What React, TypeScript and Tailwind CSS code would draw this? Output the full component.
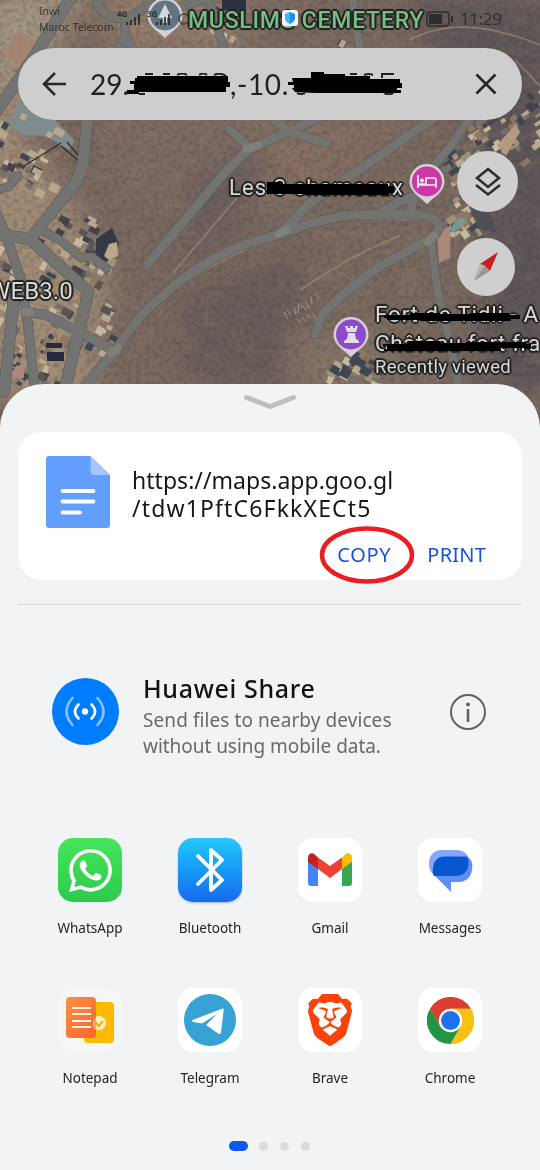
import React from "react";
import { SiBrave, SiWhatsapp } from "react-icons/si";

const ROADS: { d: string; w: number }[] = [
  { d: "M73 -6 L34 57 L-4 112", w: 11 },
  { d: "M88 112 L83 165 L76 182 L60 202 L30 239 L16 237 L-6 234", w: 11 },
  { d: "M30 239 L60 266 L88 291 L86 302 L64 392", w: 11 },
  { d: "M-6 208 L6 235 L20 277 L28 325 L35 392", w: 9 },
  { d: "M14 296 L10 335 L4 392", w: 11 },
  { d: "M28 312 L46 315 L80 332 L116 352", w: 9 },
  { d: "M43 231 L58 239 L82 258 L92 257 L106 268", w: 8 },
  {
    d: "M80 392 L116 350 Q138 315 160 298 Q195 265 240 246 L283 233 Q320 219 350 215 L405 214 Q432 214 439 224 Q440 233 428 240 L382 265 Q340 294 322 315 L315 334",
    w: 9,
  },
  { d: "M147 265 L205 196 Q230 165 250 149 L290 131 L330 112", w: 9 },
  { d: "M229 129 L250 148", w: 9 },
  { d: "M274 120 L289 132 L327 143", w: 9 },
  { d: "M281 233 L310 203 L350 176 L440 114", w: 9 },
  { d: "M468 120 L450 147 L432 168", w: 8 },
  { d: "M431 240 L437 288 L447 330 L460 392", w: 8 },
  { d: "M95 -5 Q99 15 116 18 L126 18 Q143 14 152 -4", w: 9 },
  { d: "M125 18 L125 36 L136 54 M125 36 L117 52", w: 9 },
  { d: "M165 12 L208 -2 Q217 22 224 52", w: 8 },
  { d: "M353 -3 L354 20 L361 52", w: 8 },
  { d: "M379 214 L400 201 L414 197 L410 213", w: 9 },
  { d: "M-3 190 L8 187 L18 176", w: 8 },
];

const CLUSTERS: [number, number, number, number, number][] = [
  [0, 112, 58, 70, 26],
  [0, 160, 40, 40, 14],
  [54, 212, 38, 26, 18],
  [38, 236, 62, 46, 34],
  [88, 234, 26, 34, 16],
  [40, 302, 74, 50, 52],
  [38, 346, 30, 40, 14],
  [8, 335, 20, 48, 16],
  [462, 115, 60, 55, 50],
  [440, 150, 30, 35, 18],
  [440, 195, 36, 45, 24],
  [518, 90, 20, 60, 14],
  [322, 350, 56, 30, 34],
  [0, 245, 16, 80, 20],
  [205, 3, 36, 34, 12],
  [340, 38, 15, 12, 5],
];

const TONES = ["#b7a88d", "#44424a", "#9f9077", "#c5b9a1", "#5a5455", "#776f69", "#3d4654", "#8f7862"];

function buildings() {
  let seed = 17;
  const next = () => {
    seed = (seed * 16807) % 2147483647;
    return seed / 2147483647;
  };
  return CLUSTERS.flatMap(([x, y, w, h, n], c) =>
    Array.from({ length: n }, (_, i) => {
      const px = x + next() * w;
      const py = y + next() * h;
      return (
        <rect
          key={`${c}-${i}`}
          x={px}
          y={py}
          width={4 + next() * 7}
          height={3 + next() * 6}
          fill={TONES[Math.floor(next() * TONES.length)]}
          transform={`rotate(${x > 400 ? -35 : 28} ${px} ${py})`}
        />
      );
    })
  );
}

function SatelliteMap() {
  return (
    <svg className="absolute left-0 top-0" width="540" height="450" viewBox="0 0 540 450">
      <defs>
        <filter id="soft" x="-30%" y="-30%" width="160%" height="160%" colorInterpolationFilters="sRGB">
          <feGaussianBlur stdDeviation="14" />
        </filter>
        <filter id="edge" colorInterpolationFilters="sRGB">
          <feGaussianBlur stdDeviation="0.7" />
        </filter>
        <filter id="grain" x="0" y="0" width="100%" height="100%" colorInterpolationFilters="sRGB">
          <feTurbulence type="fractalNoise" baseFrequency="0.22" numOctaves="3" seed="5" />
          <feColorMatrix values="0 0 0 0 0.22  0 0 0 0 0.2  0 0 0 0 0.23  1.8 0 0 0 -0.74" />
        </filter>
        <filter id="light" x="0" y="0" width="100%" height="100%" colorInterpolationFilters="sRGB">
          <feTurbulence type="fractalNoise" baseFrequency="0.04 0.07" numOctaves="4" seed="9" />
          <feColorMatrix values="0 0 0 0 0.65  0 0 0 0 0.55  0 0 0 0 0.47  0 1.6 0 0 -0.68" />
        </filter>
      </defs>
      <rect width="540" height="450" fill="#79695f" />
      <g filter="url(#soft)">
        <path d="M-20 -20H95L20 130L70 200L110 280L90 400H-20Z" fill="#a18c76" />
        <path d="M0 0L60 0L0 90Z" fill="#a09a87" />
        <path d="M100 40H210L270 140L190 220L100 190Z" fill="#7d6b61" />
        <path d="M100 -10H250V50H110Z" fill="#947d6b" />
        <path d="M250 110L420 120L270 220Z" fill="#866f61" />
        <path d="M180 300L300 250L310 380L190 390Z" fill="#685d5a" />
        <path d="M400 0H560V150H480L430 50Z" fill="#5f5657" />
        <path d="M490 120H560V390H480Z" fill="#5d5657" />
        <path d="M290 330H390V390H290Z" fill="#857366" />
        <path d="M200 165L270 150L240 230L170 270Z" fill="#6b5f5d" />
      </g>
      <rect width="540" height="450" filter="url(#light)" opacity="0.25" />
      <rect width="540" height="450" filter="url(#grain)" opacity="0.36" />
      <g fill="none" stroke="#ad9074" strokeWidth="1.6" opacity="0.6">
        <path d="M0 36L24 19L46 0M173 273L237 198M75 382L142 316Q185 273 270 239" />
        <path d="M410 40Q460 12 540 45M515 60L540 86" />
        <path d="M300 290Q360 250 400 236M350 219L430 219" />
      </g>
      <path d="M18 31L39 42L22 67L2 54Z" fill="#a8806d" opacity="0.75" />
      <path d="M20 101L55 120L75 141L69 150L46 136L22 135L8 123Z" fill="#7e8c8c" />
      <g filter="url(#edge)">
        {buildings()}
        <path d="M96 239L112 228L119 244L107 262L96 257Z" fill="#353845" />
        <path d="M109 244L117 242L118 256L109 260L104 256Z" fill="#b9a989" />
        <path d="M61 146L79 161M67 142L78 155M24 166L61 143" stroke="#302c2a" strokeWidth="1.3" fill="none" />
        <path d="M437 233L451 225L450 258L439 263Z" fill="#a7887a" />
        <path d="M449 229L461 216L467 222L453 233Z" fill="#779890" />
        <path d="M461 188L486 204L497 232L478 229Z" fill="#444953" opacity="0.7" />
        <path d="M497 145L516 124L520 132L506 156Z" fill="#b59a82" />
        <path d="M222 0H246V12L222 10Z" fill="#2d3242" />
        <path d="M46 343H62V348H46ZM47 352H64V361H47Z" fill="#252a3c" />
        <path d="M12 370L24 367V378H12Z" fill="#ae8580" />
      </g>
      <g fill="none" strokeLinejoin="round" strokeLinecap="round">
        {ROADS.map((r) => (
          <path key={r.d} d={r.d} stroke="#585857" strokeWidth={r.w + 1} />
        ))}
        {ROADS.map((r) => (
          <path key={r.d} d={r.d} stroke="#737371" strokeWidth={r.w} />
        ))}
        <path d="M111 353L118 348M428 242L434 236M279 234L286 230M246 149L258 145M25 312L30 312" stroke="#858581" strokeWidth="8" opacity="0.7" />
      </g>
      <g stroke="#b8aca0" strokeWidth="1" fill="none" opacity="0.7">
        <path d="M284 312l4 7m-1-9l4 6m3-9l2 8m3-12l-1 10m3-8l5 5m-1-10l4 8m2-12l1 8m3-10l4 5M297 319l3 4m2-6l3 4m2-6l4 3m2-5l3 6" />
      </g>
    </svg>
  );
}

function Scribble({ variant }: { variant: "a" | "b" }) {
  return variant === "a" ? (
    <svg width="106" height="22" viewBox="0 0 106 22" className="absolute left-[127px] top-[73px]">
      <path d="M10 3H101V9H103V14H99V19H12V21H0V17H7V11H3V8H8V5H10Z" fill="#000" />
      <path d="M18 1H26M36 1H43M50 2Q55 -1 60 2M72 2Q77 -1 80 2M87 2Q93 -1 99 3M12 21H18" stroke="#222" strokeWidth="2" fill="none" />
    </svg>
  ) : (
    <svg width="116" height="24" viewBox="0 0 116 24" className="absolute left-[287px] top-[71px]">
      <path d="M5 7H24V1H37V3H58V5H83V8H113V12H115V17H110V19H114V22H28L8 21L5 17H7V14H1V11H6Z" fill="#000" />
      <path d="M63 3H70M77 4Q82 2 86 4M95 7V3H107M10 22Q14 24 18 22M97 22Q104 25 107 21" stroke="#222" strokeWidth="2" fill="none" />
    </svg>
  );
}

function Pin({ color, children, className }: { color: string; children?: React.ReactNode; className: string }) {
  return (
    <svg className={className} width="38" height="42" viewBox="0 0 38 42">
      <path d="M19 1A17.5 17.5 0 0 1 36.5 18.5C36.500 29 27 33 19 41C11 33 1.500 29 1.500 18.500A17.500 17.500 0 0 1 19 1Z" fill="#d5d0d8" />
      <circle cx="19" cy="18.500" r="15" fill={color} />
      {children}
    </svg>
  );
}

const HALO =
  "[text-shadow:-1px_-1px_1px_#222,1px_-1px_1px_#222,-1px_1px_1px_#222,1px_1px_1px_#222,0_2px_1px_#222,2px_0_1px_#222,-2px_0_1px_#222,0_-2px_1px_#222]";

function MapLabels() {
  return (
    <div className={`font-[Roboto,sans-serif] whitespace-nowrap text-[#d8d8d8] ${HALO}`}>
      <div className="absolute left-[188px] top-[8px] text-[23px] font-medium leading-[26px] tracking-[0.75px] text-[#76bd82]">MUSLIMS CEMETERY</div>
      <div className="absolute left-[229px] top-[175px] text-[22px] leading-[25px] tracking-[1.1px]">Les 3 chameaux</div>
      <div className="absolute left-[-11px] top-[277px] text-[24px] leading-[28px] tracking-[0.1px]">WEB3.0</div>
      <div className="absolute left-[375px] top-[301px] text-[22.500px] leading-[26px] tracking-[0.8px]">Fort de Tidli - A</div>
      <div className="absolute left-[375px] top-[330px] text-[22.500px] leading-[26px] tracking-[0.5px]">Château fort fra</div>
      <div className="absolute left-[375px] top-[357px] text-[18.500px] leading-[21px] tracking-[0.25px]">Recently viewed</div>
    </div>
  );
}

function Redactions() {
  return (
    <svg className="absolute left-0 top-0" width="540" height="384" viewBox="0 0 540 384">
      <path d="M267 182H283V184H388V186H394V193H389V195H303V194H267Z" fill="#000" />
      <path d="M384 315H410V313H440V314H470V313H509V315H520V319H511V321H420V320H387V318H384Z" fill="#000" />
      <path d="M383 344H408V341H440V343H466V342H526V344H531V349H525V348H501V351H384V349H387V346H383Z" fill="#000" />
    </svg>
  );
}

function StatusBar() {
  return (
    <div className="relative flex h-12 items-start text-[#262626]">
      <div className="ml-[39px] mt-[3px] w-[76px] whitespace-nowrap text-[10.500px] leading-[16px] opacity-80">
        <div>Inwi</div>
        <div>Maroc Telecom</div>
      </div>
      <svg width="76" height="30" viewBox="0 0 76 30" className="mt-[3px] shrink-0 opacity-80">
        <text x="2" y="14" fontSize="8" fontWeight="700" fill="#222">4G</text>
        <text x="32" y="14" fontSize="8" fontWeight="700" fill="#222">3G</text>
        <path d="M12 22V19M16 22V17M20 22V14M24 22V11" stroke="#222" strokeWidth="2" />
        <path d="M42 22V19M46 22V17M50 22V14M54 22V11" stroke="#222" strokeWidth="2" />
        <circle cx="69" cy="16" r="5" fill="none" stroke="#333" strokeWidth="1.600" />
      </svg>
      <svg width="16" height="16" viewBox="0 0 16 16" className="ml-[91px] mt-[10px] shrink-0">
        <rect width="16" height="16" rx="3" fill="#f5f7f8" />
        <path d="M8 2L13 4V8C13 11 10 13 8 14C6 13 3 11 3 8V4Z" fill="#1c91f4" />
        <path d="M8 2V14C6 13 3 11 3 8V4Z" fill="#45b5ff" />
      </svg>
      <svg width="28" height="16" viewBox="0 0 28 16" className="ml-[128px] mt-[11px] shrink-0 opacity-80">
        <rect x="1" y="1" width="22" height="14" rx="3" fill="none" stroke="#222" strokeWidth="1.400" />
        <rect x="3" y="3" width="13" height="10" rx="1" fill="#222" />
        <path d="M26 5V11" stroke="#222" strokeWidth="2" />
      </svg>
      <span className="ml-[6px] mt-[9px] text-[17px] leading-[20px] tracking-[-0.4px] opacity-80">11:29</span>
    </div>
  );
}

function SearchBar() {
  return (
    <div className="relative mx-[18px] flex h-[72px] items-center rounded-full bg-[#cecece] text-[#202124]">
      <svg width="26" height="26" viewBox="0 0 26 26" className="ml-6" fill="none" stroke="#252629" strokeWidth="2.500">
        <path d="M24 13H2M13 2L2 13L13 24" />
      </svg>
      <div className="ml-[22px] flex grow items-center font-[Lato,sans-serif] text-[28px] leading-9">
        <span className="w-[140px]">29.</span>
        <span className="tracking-[0.6px]">,-10.</span>
      </div>
      <svg width="22" height="22" viewBox="0 0 22 22" className="mr-[25px]" fill="none" stroke="#252629" strokeWidth="2.500">
        <path d="M1.500 1.500L20.500 20.500M20.500 1.500L1.500 20.500" />
      </svg>
    </div>
  );
}

const tile = "flex size-16 shrink-0 items-center justify-center rounded-[15px]";

const APPS: { name: string; icon: React.ReactNode }[] = [
  {
    name: "WhatsApp",
    icon: (
      <div className={`${tile} bg-linear-to-b from-[#45e65c] to-[#2cca4b]`}>
        <SiWhatsapp size={43} color="#fff" />
      </div>
    ),
  },
  {
    name: "Bluetooth",
    icon: (
      <div className={`${tile} bg-linear-to-b from-[#27c8fc] to-[#1c68ed] shadow-[0_1px_2px_#9bbce8]`}>
        <svg width="64" height="64" viewBox="0 0 64 64" fill="none" stroke="#fff" strokeWidth="3.800" strokeLinecap="round" strokeLinejoin="round">
          <path d="M20 18L44 42L33 52V12L44 22L20 46" />
        </svg>
      </div>
    ),
  },
  {
    name: "Gmail",
    icon: (
      <div className={`${tile} bg-white`}>
        <svg width="44" height="34" viewBox="0 0 44 34">
          <path d="M0 8L10 14V33H3Q0 33 0 30Z" fill="#4285f4" />
          <path d="M34 14L44 8V30Q44 33 41 33H34Z" fill="#34a853" />
          <path d="M34 4.500L36.500 2.300C40 -1.500 44 .8 44 5V9L34 16Z" fill="#fbbc04" />
          <path d="M10 4.500L22 13L34 4.500V16L22 25L10 16Z" fill="#ea4335" />
          <path d="M10 4.500L7.500 2.300C4 -1.500 0 .8 0 5V9L10 16Z" fill="#c5221f" />
        </svg>
      </div>
    ),
  },
  {
    name: "Messages",
    icon: (
      <div className={`${tile} bg-white`}>
        <svg width="64" height="64" viewBox="0 0 64 64">
          <path d="M23 12H39C44 12 49 15 50 19L46 38H17C12 34 11 30 11 25C11 17 17 12 23 12Z" fill="#87a8fa" />
          <path d="M15 33L50 19C54 22 55 27 54 32C53 40 47 44 41 44H33V54L17 38Z" fill="#628cf5" />
          <path d="M26 18.500H49Q51 22 50.500 27C49 34 45 38 38 38H16Q14 35 15 30C15.500 23 20 18.500 26 18.500Z" fill="#0755cf" />
        </svg>
      </div>
    ),
  },
  {
    name: "Notepad",
    icon: (
      <div className={`${tile} bg-[#f6f6f6]`}>
        <svg width="64" height="64" viewBox="0 0 64 64">
          <defs>
            <linearGradient id="note" x2="1" y2="1">
              <stop stopColor="#ff9142" />
              <stop offset="1" stopColor="#fb632e" />
            </linearGradient>
          </defs>
          <rect x="26" y="14" width="30" height="41" rx="4" fill="#ffb900" />
          <circle cx="41" cy="35" r="7" fill="#fff0c5" />
          <rect x="8" y="9" width="30" height="41" rx="4" fill="url(#note)" />
          <path d="M34.500 36Q34.500 32 38 29V42Q34.500 40 34.500 36Z" fill="#ffa477" />
          <path d="M37.500 34.500L41 38L45 33" fill="none" stroke="#f8ac00" strokeWidth="2" />
          <path d="M14 20H33M14 26H33M14 33H33M14 39H33" stroke="#fff3e9" strokeWidth="2" />
        </svg>
      </div>
    ),
  },
  {
    name: "Telegram",
    icon: (
      <div className={`${tile} bg-white`}>
        <svg width="52" height="52" viewBox="0 0 52 52">
          <circle cx="26" cy="26" r="26" fill="#36a2d5" />
          <path d="M8.500 26L38 14.700Q40 14 39.700 16L37 38.500Q36.500 41 34.500 39.700L22 31L33 20L18 29.500L9 28Q7.500 27 8.500 26Z" fill="#fff" />
        </svg>
      </div>
    ),
  },
  {
    name: "Brave",
    icon: (
      <div className={`${tile} bg-white`}>
        <SiBrave size={52} color="#fb4208" />
      </div>
    ),
  },
  {
    name: "Chrome",
    icon: (
      <div className={`${tile} bg-white`}>
        <svg width="47" height="47" viewBox="0 0 48 48">
          <circle cx="24" cy="24" r="24" fill="#f8c012" />
          <path d="M3.200 12A24 24 0 0 1 44.800 12H24L13.600 30Z" fill="#db3c33" />
          <path d="M3.200 12A24 24 0 0 0 24 48L34.400 30L24 36L13.600 30Z" fill="#219545" />
          <path d="M24 12H44.800A24 24 0 0 1 24 48L34.400 30Z" fill="#f8c012" />
          <circle cx="24" cy="24" r="12" fill="#fff" />
          <circle cx="24" cy="24" r="9.600" fill="#1b73e8" />
        </svg>
      </div>
    ),
  },
];

function LinkCard() {
  return (
    <div className="relative mx-[18px] mt-[20px] h-[148px] shrink-0 rounded-[24px] bg-white">
      <div className="flex pl-[28px] pt-[24px]">
        <svg width="64" height="72" viewBox="0 0 64 72">
          <path d="M3 0H44.500L64 19V69Q64 72 61 72H3Q0 72 0 69V3Q0 0 3 0Z" fill="#629ffd" />
          <path d="M44.500 0L64 19H48Q44.500 19 44.500 15Z" fill="#a4c6fb" />
          <path d="M16.500 35H47.500M16.500 45.500H47.500M16.500 56.500H34" stroke="#fff" strokeWidth="3.800" strokeLinecap="round" />
        </svg>
        <div className="ml-[22px] mt-[10px] whitespace-nowrap text-[23px] leading-[28px] text-[#161719]">
          <div className="tracking-[0.03px]">https://maps.app.goo.gl</div>
          <div className="tracking-[1.15px]">/tdw1PftC6FkkXECt5</div>
        </div>
      </div>
      <div className="mt-[13px] flex justify-end gap-[36px] pr-[36px] text-[20px] leading-[27px] text-[#1554d4]">
        <button className="relative tracking-[0.7px]">
          COPY
          <svg className="absolute left-[-18px] top-[-15px] max-w-none" width="96" height="58" viewBox="0 0 96 58">
            <ellipse cx="48" cy="29" rx="45" ry="26.500" fill="none" stroke="#ed1c24" strokeWidth="4.500" />
          </svg>
        </button>
        <button className="tracking-[0.2px]">PRINT</button>
      </div>
    </div>
  );
}

export default function App() {
  return (
    <div className="relative h-[1170px] w-[540px] overflow-hidden bg-[#5d5353] font-['Noto_Sans',sans-serif]">
      <SatelliteMap />
      <div className="relative h-[384px]">
        <Pin color="#617682" className="absolute left-[146px] top-[-3px]">
          <path d="M19 7L12 21H17V26H21V21H26Z" fill="#d4d7d9" />
        </Pin>
        <MapLabels />
        <Redactions />
        <StatusBar />
        <SearchBar />
        <Scribble variant="a" />
        <Scribble variant="b" />
        <Pin color="#c93aa5" className="absolute left-[408px] top-[163px]">
          <path d="M10 12V25M28 25V17Q28 15 26 15H18V21H10M10 22H28" stroke="#eee" strokeWidth="1.700" fill="none" />
          <circle cx="14" cy="17.500" r="2" fill="#eee" />
        </Pin>
        <Pin color="#8c4bc9" className="absolute left-[332px] top-[316px]">
          <path d="M13 10H16V12H18V10H21V12H23V10H26L24 16H15ZM16 17H23L24 23L27 25V27H12V25L15 23Z" fill="#e4dce9" />
        </Pin>
        <button className="absolute left-[457px] top-[151px] flex size-[61px] items-center justify-center rounded-full bg-[#cfcfcf]">
          <svg width="28" height="30" viewBox="0 0 28 30" fill="none" stroke="#292b2e" strokeWidth="2.500">
            <path d="M14 2L25 11L14 20L3 11ZM2 18L14 27.500L26 18" />
          </svg>
        </button>
        <button className="absolute left-[457px] top-[238px] size-[58px] rounded-full bg-[#cfcfcf]">
          <svg width="58" height="58" viewBox="0 0 58 58">
            <path d="M41 14L23 26L27.500 27.500L33 33Z" fill="#c91e1e" />
            <path d="M23 26L27.500 27.500L33 33L17 43Z" fill="#96999b" />
            <path d="M23 26L27.500 28L17 43Z" fill="#b4b6b7" />
          </svg>
        </button>
      </div>
      <div className="relative flex h-[786px] flex-col rounded-t-[44px] bg-[#f1f3f5]">
        <svg width="54" height="18" viewBox="0 0 54 18" className="mx-auto mt-[10px] shrink-0">
          <path d="M3.500 3.500L27 12.500L50.500 3.500" fill="none" stroke="#bcbec0" strokeWidth="5" strokeLinecap="round" strokeLinejoin="round" />
        </svg>
        <LinkCard />
        <div className="mx-[18px] mt-6 h-px shrink-0 bg-[#d8dadc]" />
        <div className="mt-[68px] flex h-[84px] shrink-0 items-start pl-[52px] pr-[53px]">
          <svg width="67" height="67" viewBox="0 0 67 67" className="mt-[5px] shrink-0">
            <circle cx="33.500" cy="33.500" r="33.500" fill="#007cff" />
            <circle cx="33" cy="33.500" r="3.200" fill="#fff" />
            <g fill="none" strokeWidth="2.600" strokeLinecap="round">
              <path d="M26.500 26.500Q19.500 33.500 26.500 40.500M39.500 26.500Q46.500 33.500 39.500 40.500" stroke="#fff" />
              <path d="M20.500 20Q8.500 33.500 20.500 47M45.500 20Q57.500 33.500 45.500 47" stroke="#86c0ff" />
            </g>
          </svg>
          <div className="ml-[24px] grow whitespace-nowrap">
            <div className="-mt-px text-[25px] font-medium leading-[32px] tracking-[0.65px] text-[#111214]">Huawei Share</div>
            <div className="mt-[4px] text-[19px] leading-[25.500px] text-[#67696b]">
              <div className="tracking-[0.08px]">Send files to nearby devices</div>
              <div className="tracking-[-0.04px]">without using mobile data.</div>
            </div>
          </div>
          <svg width="38" height="38" viewBox="0 0 38 38" className="mt-[20px] shrink-0">
            <circle cx="19" cy="19" r="17" fill="none" stroke="#606265" strokeWidth="2" />
            <circle cx="19" cy="11.500" r="2" fill="#606265" />
            <path d="M19 16V29" stroke="#606265" strokeWidth="2.600" />
          </svg>
        </div>
        <div className="mt-[81px] grid grid-cols-4 gap-y-[50px] px-[30px]">
          {APPS.map((app) => (
            <div key={app.name} className="flex h-[100px] flex-col items-center">
              {app.icon}
              <div className="mt-[16px] text-[13.500px] leading-[20px] text-[#232426]">{app.name}</div>
            </div>
          ))}
        </div>
        <div className="ml-[229px] mt-[53px] flex items-center gap-3">
          <div className="h-[10px] w-[19px] rounded-full bg-[#0a59f7]" />
          <div className="-ml-px size-[9px] rounded-full bg-[#d9dbdd]" />
          <div className="size-[9px] rounded-full bg-[#d9dbdd]" />
          <div className="size-[9px] rounded-full bg-[#d9dbdd]" />
        </div>
      </div>
    </div>
  );
}
